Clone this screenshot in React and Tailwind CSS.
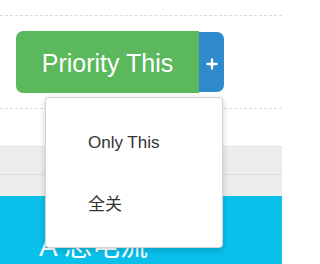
import { Plus } from 'lucide-react'

function Dropdown() {
  return (
    <div className="absolute left-[45px] top-[97px] w-[178px] h-[151px] rounded-[4px] border border-[#d4d4d4] bg-white shadow-[0_2px_6px_rgba(0,0,0,0.18)] pt-[14px]">
      <ul className="m-0 p-0 list-none text-[17px] text-[#333]">
        <li className="h-[62px] flex items-center pl-[42px]">Only This</li>
        <li className="h-[62px] flex items-center pl-[42px]">全关</li>
      </ul>
    </div>
  )
}

export default function App() {
  return (
    <div className="relative w-[282px] h-[264px] overflow-hidden bg-white font-['Liberation_Sans','Noto_Sans_CJK_SC',sans-serif]">
      <div className="h-[16px] border-b border-dashed border-[#dcdcdc]" />
      <div className="h-[93px] pt-[15px] pl-4 border-b border-dashed border-[#dcdcdc]">
        <div className="flex items-center">
          <button className="h-[62px] w-[183px] rounded-l-[7px] bg-[#5cb85c] text-white text-[25px] flex items-center justify-center pt-[4px]">
            Priority This
          </button>
          <button className="h-[60px] w-[25px] rounded-r-[7px] bg-[#2f8acb] text-white flex items-center justify-center pt-[3px]">
            <Plus size={16} strokeWidth={3.4} />
          </button>
        </div>
      </div>
      <div className="h-[37px]" />
      <div className="h-[50px] bg-[#ededed] border-t border-[#e2e2e2]">
        <div className="h-[28px] border-b border-[#dedede]" />
      </div>
      <div className="h-[80px] bg-[#08c0ea] pl-[39px] pt-[37px]">
        <div className="text-white text-[28px] leading-none">A 总电流</div>
      </div>
      <Dropdown />
    </div>
  )
}
